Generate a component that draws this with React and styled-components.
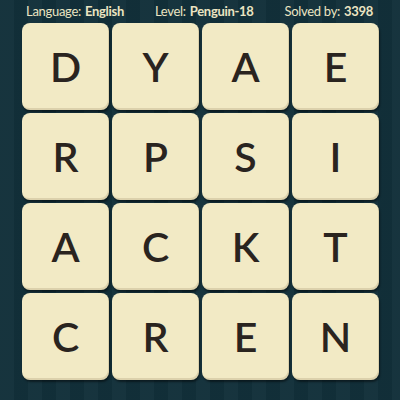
import React from 'react';
import styled, { createGlobalStyle } from 'styled-components';

const GlobalStyle = createGlobalStyle`
  html, body {
    margin: 0;
    padding: 0;
    background: #123039;
  }
`;

const rows = [
  ['D', 'Y', 'A', 'E'],
  ['R', 'P', 'S', 'I'],
  ['A', 'C', 'K', 'T'],
  ['C', 'R', 'E', 'N'],
];

const Page = styled.div`
  width: 400px;
  height: 400px;
  overflow: hidden;
  box-sizing: border-box;
  padding: 0 20px 0 22px;
  background-color: #12303a;
  background-image: repeating-linear-gradient(
    90deg,
    rgba(255, 255, 255, 0.02) 0px,
    rgba(255, 255, 255, 0.02) 14px,
    rgba(0, 0, 0, 0.035) 14px,
    rgba(0, 0, 0, 0.035) 28px
  );
  font-family: Lato, 'Open Sans', sans-serif;
`;

const Header = styled.div`
  display: flex;
  justify-content: space-between;
  align-items: center;
  height: 22px;
  padding: 0 7px 0 4px;
  color: #ebe4c2;
  font-size: 13px;
  letter-spacing: -0.3px;
`;

const Stat = styled.span`
  white-space: nowrap;
  b {
    font-weight: 700;
    margin-left: 4px;
  }
`;

const Grid = styled.div`
  display: grid;
  grid-template-columns: repeat(4, 87px);
  grid-auto-rows: 87px;
  gap: 3px;
  margin-top: 1px;
`;

const Tile = styled.div`
  display: flex;
  align-items: center;
  justify-content: center;
  background: #f2eac5;
  border-radius: 8px;
  box-shadow: inset -1px -2px 0 rgba(120, 100, 60, 0.18),
    1px 2px 2px rgba(0, 0, 0, 0.45);
  color: #2a241f;
  font-size: 41px;
  font-weight: 600;
  line-height: 1;
`;

const App = () => {
  return (
    <>
      <GlobalStyle />
      <Page>
        <Header>
          <Stat>
            Language:<b>English</b>
          </Stat>
          <Stat>
            Level:<b>Penguin-18</b>
          </Stat>
          <Stat>
            Solved by:<b>3398</b>
          </Stat>
        </Header>
        <Grid>
          {rows.flat().map((letter, i) => (
            <Tile key={i}>{letter}</Tile>
          ))}
        </Grid>
      </Page>
    </>
  );
};

export default App;
